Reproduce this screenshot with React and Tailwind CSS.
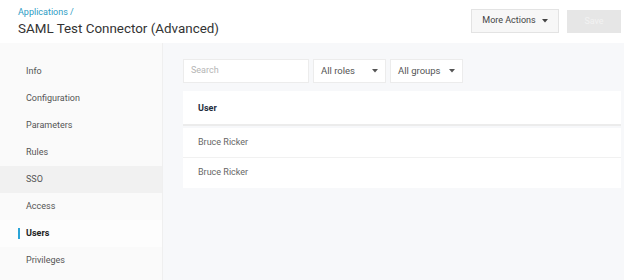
import React from "react";

const Caret = () => (
  <svg width="6" height="4" viewBox="0 0 6 4" className="fill-current">
    <path d="M0 0h6L3 3.5z" />
  </svg>
);

export default function App() {
  const items = ["Info", "Configuration", "Parameters", "Rules", "SSO", "Access", "Users", "Privileges"];
  return (
    <div className="w-[624px] h-[280px] overflow-hidden flex flex-col bg-[#f7f8fa]" style={{ fontFamily: "Roboto, 'Liberation Sans', sans-serif" }}>
      <div className="h-[43px] bg-white flex items-start justify-between shrink-0">
        <div className="pl-[18px] pt-[6px] flex flex-col">
          <div className="text-[9px] leading-[12px] text-[#2d9cc4]">Applications /</div>
          <div className="text-[13.4px] leading-[18px] mt-[2px] text-[#333]">SAML Test Connector (Advanced)</div>
        </div>
        <div className="flex gap-[8px] pt-[9px] pr-[3px]">
          <div className="w-[88px] h-[24px] bg-[#f7f7f7] border border-[#e3e3e3] flex items-center justify-center gap-[6px] text-[9px] text-[#444]">
            <span>More Actions</span>
            <span className="text-[#444]"><Caret /></span>
          </div>
          <div className="w-[54px] h-[23px] mt-[1px] bg-[#e6e6e6] flex items-center justify-center text-[9px] text-[#f2f2f2]">Save</div>
        </div>
      </div>
      <div className="flex flex-1">
        <div className="w-[163px] shrink-0 bg-[#fafafa] border-r border-[#efefef] pt-[15px]">
          {items.map((it) => {
            const sso = it === "SSO";
            const users = it === "Users";
            return (
              <div
                key={it}
                className={
                  "h-[27px] flex items-center relative pl-[26px] text-[9px] " +
                  (sso ? "bg-[#f1f1f1] text-[#555]" : users ? "bg-[#fdfdfd] text-[#222] font-bold" : "text-[#555]")
                }
              >
                {users && <div className="absolute left-[18px] top-[8px] w-[2px] h-[11px] bg-[#2ba5d8]" />}
                {it}
              </div>
            );
          })}
        </div>
        <div className="flex-1 pl-[20px] pr-[4px] pt-[16px]">
          <div className="flex gap-[4px]">
            <div className="w-[126px] h-[24px] bg-white border border-[#ececec] flex items-center pl-[7px] text-[9px] text-[#b5b5b5]">Search</div>
            <div className="w-[73px] h-[24px] bg-white border border-[#ececec] flex items-center justify-between pl-[7px] pr-[7px] text-[9.5px] text-[#555]">
              <span>All roles</span>
              <Caret />
            </div>
            <div className="w-[73px] h-[24px] bg-white border border-[#ececec] flex items-center justify-between pl-[7px] pr-[7px] text-[9.5px] text-[#555]">
              <span>All groups</span>
              <Caret />
            </div>
          </div>
          <div className="mt-[8px] w-[438px]">
            <div className="h-[35px] bg-white border-b-2 border-[#ececec] flex items-center pl-[15px] pt-[2px] text-[9px] font-bold text-[#1f2d3d]">User</div>
            <div className="mt-[2px] bg-white">
              <div className="h-[30px] flex items-center pl-[15px] text-[9px] text-[#666] border-b border-[#f1f1f1]">Bruce Ricker</div>
              <div className="h-[30px] flex items-center pl-[15px] text-[9px] text-[#666]">Bruce Ricker</div>
            </div>
          </div>
        </div>
      </div>
    </div>
  );
}
